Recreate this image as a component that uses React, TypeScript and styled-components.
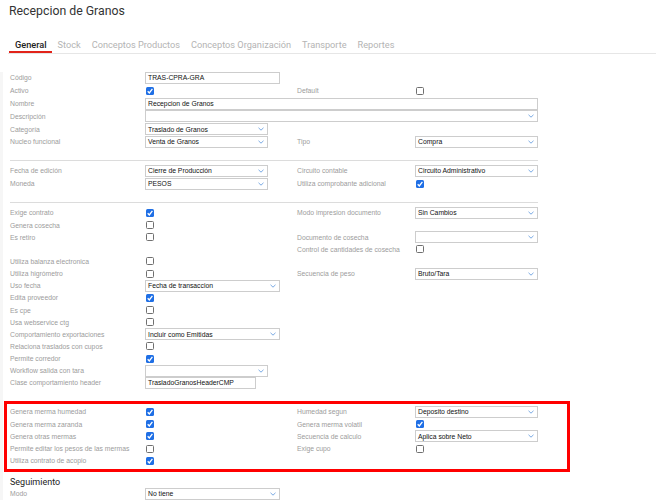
import React from 'react';
import styled, { createGlobalStyle } from 'styled-components';

const GlobalStyle = createGlobalStyle`
  html, body { margin: 0; padding: 0; background: #fff; }
  * { box-sizing: border-box; }
`;

const Page = styled.div`
  width: 656px;
  height: 500px;
  overflow: hidden;
  background: #fff;
  font-family: "Liberation Sans", Arial, sans-serif;
`;

const Title = styled.h1`
  margin: 0 0 0 9px;
  font-family: Roboto, "Liberation Sans", sans-serif;
  font-weight: 400;
  font-size: 12.3px;
  line-height: 22px;
  color: #333;
`;

const TabBar = styled.div`
  display: flex;
  margin: 16px 0 0 8px;
  padding-left: 1px;
  height: 16px;
  border-bottom: 1px solid #e6e6e6;
`;

const Tab = styled.div<{ $active?: boolean }>`
  height: 15px;
  padding: 0 5px 0 6px;
  font-family: Roboto, "Liberation Sans", sans-serif;
  font-size: 9.2px;
  line-height: 13px;
  font-weight: ${p => (p.$active ? 500 : 400)};
  color: ${p => (p.$active ? '#222' : '#b4b4b4')};
  border-bottom: 2px solid ${p => (p.$active ? '#e2231a' : 'transparent')};
  white-space: nowrap;
`;

const Content = styled.div`
  border-left: 3px solid #f6f6f6;
  padding-left: 7px;
  height: 446px;
`;

const Section = styled.div<{ $top?: number }>`
  margin-top: ${p => p.$top ?? 0}px;
`;

const Row = styled.div<{ $h: number }>`
  display: grid;
  grid-template-columns: 135px 152px 118px 123px;
  height: ${p => p.$h}px;
  align-items: center;
`;

const Label = styled.span`
  font-size: 6.8px;
  color: #9c9c9c;
  white-space: nowrap;
`;

const Divider = styled.div<{ $above: number; $below: number }>`
  width: 528px;
  height: 1px;
  background: #dcdcdc;
  margin: ${p => p.$above}px 0 ${p => p.$below}px;
`;

const Field = styled.div<{ $w?: number; $span?: boolean }>`
  width: ${p => (p.$w ? `${p.$w}px` : '100%')};
  grid-column: ${p => (p.$span ? '2 / span 3' : 'auto')};
  height: 12px;
  border: 1px solid #cdcdcd;
  background: #fff;
  display: flex;
  align-items: center;
  justify-content: space-between;
  padding: 0 3px 0 2px;
  font-size: 6.8px;
  color: #111;
  white-space: nowrap;
`;

const Box = styled.span<{ $on?: boolean }>`
  display: block;
  width: 8px;
  height: 8px;
  margin-left: 1px;
  border-radius: 1.5px;
  background: ${p => (p.$on ? '#1f6fe5' : '#fff')};
  border: ${p => (p.$on ? 'none' : '1px solid #707070')};
  svg { display: block; }
`;

const RedBox = styled.div`
  margin: 11.85px 0 0 -6px;
  width: 566px;
  border: 3px solid #ff0000;
  padding: 1.9px 0 1.85px 3px;
`;

const Heading = styled.h2`
  margin: 4px 0 0;
  font-family: Roboto, "Liberation Sans", sans-serif;
  font-weight: 400;
  font-size: 9px;
  line-height: 12px;
  color: #222;
`;

const Chevron = () => (
  <svg width="6" height="4" viewBox="0 0 6 4">
    <polyline points="0.5,0.8 3,3.2 5.5,0.8" fill="none" stroke="#6a9fe0" strokeWidth="0.9" />
  </svg>
);

const Check = ({ on }: { on?: boolean }) => (
  <Box $on={on}>
    {on && (
      <svg width="8" height="8" viewBox="0 0 8 8">
        <polyline points="1.7,4.2 3.3,5.9 6.4,1.9" fill="none" stroke="#fff" strokeWidth="1.3" />
      </svg>
    )}
  </Box>
);

const Select = ({ value = '', w, span }: { value?: string; w?: number; span?: boolean }) => (
  <Field $w={w} $span={span}>
    <span>{value}</span>
    <Chevron />
  </Field>
);

const Input = ({ value = '', w, span }: { value?: string; w?: number; span?: boolean }) => (
  <Field $w={w} $span={span}>
    <span>{value}</span>
  </Field>
);

const E = () => <span />;

const App = () => {
  return (
    <Page>
      <GlobalStyle />
      <Title>Recepcion de Granos</Title>
      <TabBar>
        <Tab $active>General</Tab>
        <Tab>Stock</Tab>
        <Tab>Conceptos Productos</Tab>
        <Tab>Conceptos Organización</Tab>
        <Tab>Transporte</Tab>
        <Tab>Reportes</Tab>
      </TabBar>

      <Content>
        <Section $top={17.6}>
          <Row $h={12.8}>
            <Label>Código</Label>
            <Input value="TRAS-CPRA-GRA" w={135} />
            <E /><E />
          </Row>
          <Row $h={12.8}>
            <Label>Activo</Label>
            <Check on />
            <Label>Default</Label>
            <Check />
          </Row>
          <Row $h={12.8}>
            <Label>Nombre</Label>
            <Input value="Recepcion de Granos" span />
          </Row>
          <Row $h={12.8}>
            <Label>Descripción</Label>
            <Select span />
          </Row>
          <Row $h={12.8}>
            <Label>Categoría</Label>
            <Select value="Traslado de Granos" w={123} />
            <E /><E />
          </Row>
          <Row $h={12.8}>
            <Label>Nucleo funcional</Label>
            <Select value="Venta de Granos" w={123} />
            <Label>Tipo</Label>
            <Select value="Compra" />
          </Row>
        </Section>

        <Divider $above={11.6} $below={3.5} />

        <Section>
          <Row $h={13}>
            <Label>Fecha de edición</Label>
            <Select value="Cierre de Producción" w={123} />
            <Label>Circuito contable</Label>
            <Select value="Circuito Administrativo" />
          </Row>
          <Row $h={13}>
            <Label>Moneda</Label>
            <Select value="PESOS" w={123} />
            <Label>Utiliza comprobante adicional</Label>
            <Check on />
          </Row>
        </Section>

        <Divider $above={11.5} $below={3.9} />

        <Section>
          <Row $h={12.15}>
            <Label>Exige contrato</Label>
            <Check on />
            <Label>Modo impresion documento</Label>
            <Select value="Sin Cambios" />
          </Row>
          <Row $h={12.15}>
            <Label>Genera cosecha</Label>
            <Check />
            <E /><E />
          </Row>
          <Row $h={12.15}>
            <Label>Es retiro</Label>
            <Check />
            <Label>Documento de cosecha</Label>
            <Select />
          </Row>
          <Row $h={12.15}>
            <E /><E />
            <Label>Control de cantidades de cosecha</Label>
            <Check />
          </Row>
          <Row $h={12.15}>
            <Label>Utiliza balanza electronica</Label>
            <Check />
            <E /><E />
          </Row>
          <Row $h={12.15}>
            <Label>Utiliza higrómetro</Label>
            <Check />
            <Label>Secuencia de peso</Label>
            <Select value="Bruto/Tara" />
          </Row>
          <Row $h={12.15}>
            <Label>Uso fecha</Label>
            <Select value="Fecha de transaccion" w={135} />
            <E /><E />
          </Row>
          <Row $h={12.15}>
            <Label>Edita proveedor</Label>
            <Check on />
            <E /><E />
          </Row>
          <Row $h={12.15}>
            <Label>Es cpe</Label>
            <Check />
            <E /><E />
          </Row>
          <Row $h={12.15}>
            <Label>Usa webservice ctg</Label>
            <Check />
            <E /><E />
          </Row>
          <Row $h={12.15}>
            <Label>Comportamiento exportaciones</Label>
            <Select value="Incluir como Emitidas" w={135} />
            <E /><E />
          </Row>
          <Row $h={12.15}>
            <Label>Relaciona traslados con cupos</Label>
            <Check />
            <E /><E />
          </Row>
          <Row $h={12.15}>
            <Label>Permite corredor</Label>
            <Check on />
            <E /><E />
          </Row>
          <Row $h={12.15}>
            <Label>Workflow salida con tara</Label>
            <Select w={123} />
            <E /><E />
          </Row>
          <Row $h={12.15}>
            <Label>Clase comportamiento header</Label>
            <Input value="TrasladoGranosHeaderCMP" w={111} />
            <E /><E />
          </Row>
        </Section>

        <RedBox>
          <Row $h={12.25}>
            <Label>Genera merma humedad</Label>
            <Check on />
            <Label>Humedad segun</Label>
            <Select value="Deposito destino" />
          </Row>
          <Row $h={12.25}>
            <Label>Genera merma zaranda</Label>
            <Check on />
            <Label>Genera merma volatil</Label>
            <Check on />
          </Row>
          <Row $h={12.25}>
            <Label>Genera otras mermas</Label>
            <Check on />
            <Label>Secuencia de calculo</Label>
            <Select value="Aplica sobre Neto" />
          </Row>
          <Row $h={12.25}>
            <Label>Permite editar los pesos de las mermas</Label>
            <Check />
            <Label>Exige cupo</Label>
            <Check />
          </Row>
          <Row $h={12.25}>
            <Label>Utiliza contrato de acopio</Label>
            <Check on />
            <E /><E />
          </Row>
        </RedBox>

        <Heading>Seguimiento</Heading>
        <Row $h={12}>
          <Label>Modo</Label>
          <Select value="No tiene" w={135} />
          <E /><E />
        </Row>
      </Content>
    </Page>
  );
};

export default App;
